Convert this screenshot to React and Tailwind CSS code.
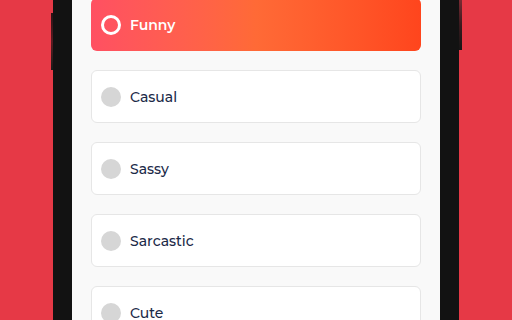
import React from 'react';

const TONES = ['Funny', 'Casual', 'Sassy', 'Sarcastic', 'Cute'];

function ToneOption({ label, selected }) {
  if (selected) {
    return (
      <div className="flex h-[53px] items-center gap-[9px] rounded-[6px] bg-gradient-to-r from-[#ff5062] via-[#ff6a36] to-[#ff451d] pl-[10px]">
        <span className="block h-5 w-5 rounded-full border-[3.5px] border-white" />
        <span className="pt-[2px] text-[14px] font-semibold text-white">{label}</span>
      </div>
    );
  }
  return (
    <div className="flex h-[53px] items-center gap-[9px] rounded-[6px] border border-[#e6e6e6] bg-white pl-[9px]">
      <span className="block h-5 w-5 rounded-full bg-[#d6d6d6]" />
      <span className="pt-[2px] text-[14px] font-medium text-[#1b2a48]">{label}</span>
    </div>
  );
}

export default function App() {
  return (
    <div
      className="flex h-[320px] w-[512px] justify-center overflow-hidden bg-[#e63946]"
      style={{ fontFamily: 'Montserrat, Inter, "Open Sans", sans-serif' }}
    >
      {/* Phone */}
      <div className="relative h-[320px] w-[406px] bg-[#121212] px-[19px]">
        {/* side buttons */}
        <div className="absolute left-[-2px] top-[13px] h-[57px] w-[2px] bg-gradient-to-b from-[#2a1216] via-[#5a1a22] to-[#1a1a1a]" />
        <div className="absolute right-[-3px] top-0 h-[50px] w-[3px] bg-gradient-to-b from-[#7a2a32] via-[#3a1a1e] to-[#151515]" />

        {/* Screen */}
        <div className="h-[320px] overflow-hidden bg-[#f9f9f9] px-[19px]">
          <div className="-mt-[2px] flex flex-col gap-[19px]">
            {TONES.map((t, i) => (
              <ToneOption key={t} label={t} selected={i === 0} />
            ))}
          </div>
        </div>
      </div>
    </div>
  );
}
